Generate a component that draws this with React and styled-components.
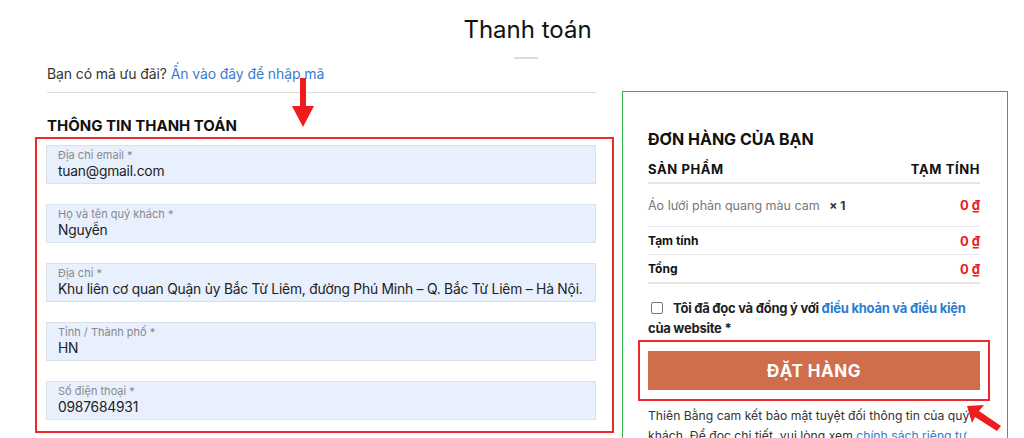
import React from "react";
import styled, { createGlobalStyle } from "styled-components";

const GlobalStyle = createGlobalStyle`
  body {
    margin: 0;
    background: #fff;
    font-family: Inter, "Noto Sans", sans-serif;
    color: #222;
    overflow: hidden;
  }
`;

const Page = styled.div`
  position: relative;
  width: 1024px;
  height: 438px;
  overflow: hidden;
`;

const Title = styled.h1`
  margin: 0;
  padding-top: 13px;
  text-align: center;
  font-size: 24px;
  line-height: 34px;
  font-weight: 400;
  color: #111;
  padding-left: 31px;
`;

const TitleBar = styled.div`
  width: 24px;
  height: 2px;
  background: #ddd;
  margin: 10px 0 0 514px;
`;

const Columns = styled.div`
  display: grid;
  grid-template-columns: 549px 386px;
  column-gap: 26px;
  margin: 4px 0 0 47px;
  align-items: start;
`;

const LeftCol = styled.div`
  position: relative;
`;

const Coupon = styled.div`
  font-size: 14px;
  line-height: 20px;
  letter-spacing: -0.1px;
  color: #333;
  padding-top: 1px;
  padding-bottom: 8px;
  border-bottom: 1px solid #ddd;
  a {
    color: #3a7dcc;
    text-decoration: none;
  }
`;

const Heading = styled.h3`
  margin: 23px 0 0;
  font-size: 15px;
  line-height: 20px;
  font-weight: 700;
  color: #111;
`;

const Fields = styled.div`
  position: relative;
  display: flex;
  flex-direction: column;
  gap: 20px;
  margin-top: 9px;
  margin-left: -1px;
`;

const Field = styled.div`
  height: 39px;
  box-sizing: border-box;
  background: #e8f0fe;
  border: 1px solid #dbe1ea;
  padding: 3px 11px 0;
`;

const Label = styled.div`
  font-size: 11px;
  line-height: 13px;
  color: #888;
`;

const Value = styled.div`
  font-size: 13.8px;
  line-height: 19px;
  letter-spacing: -0.2px;
  color: #222;
  white-space: nowrap;
`;

const Annotation = styled.div`
  position: absolute;
  border: 2px solid #ec2a2e;
  box-sizing: border-box;
  left: ${p => p.l}px;
  top: ${p => p.t}px;
  right: ${p => p.r}px;
  bottom: ${p => p.b}px;
  pointer-events: none;
`;

const ArrowSvg = styled.svg`
  position: absolute;
  left: ${p => p.x}px;
  top: ${p => p.y}px;
`;

const OrderBox = styled.div`
  margin-top: 28px;
  border: 1.5px solid #2fae4a;
  padding: 37px 27px 0 25px;
  height: 380px;
  box-sizing: border-box;
`;

const OrderTitle = styled.h3`
  margin: 0 0 7px;
  font-size: 16px;
  line-height: 20px;
  font-weight: 700;
  color: #111;
`;

const Row = styled.div`
  display: flex;
  justify-content: space-between;
  align-items: center;
  box-sizing: border-box;
  height: ${p => p.h}px;
  border-bottom: ${p => p.thick ? 2 : 1}px solid #e6e6e6;
  font-size: ${p => p.head ? 13 : 12}px;
  font-weight: ${p => p.bold ? 700 : 400};
  letter-spacing: ${p => p.head ? "0.6px" : "0"};
  color: #111;
`;

const Product = styled.span`
  font-size: 12.5px;
  color: #777;
  b {
    color: #333;
    margin-left: 6px;
    font-size: 12px;
  }
`;

const Price = styled.span`
  color: #ee1c24;
  font-weight: 700;
  font-size: 13px;
`;

const Terms = styled.div`
  margin-top: 14px;
  font-size: 13px;
  line-height: 20px;
  letter-spacing: -0.25px;
  font-weight: 700;
  color: #222;
  a {
    color: #2a7dd1;
    text-decoration: none;
  }
`;

const Check = styled.span`
  display: inline-block;
  width: 10px;
  height: 10px;
  border: 1px solid #777;
  border-radius: 2px;
  margin: 0 10px 0 3px;
  vertical-align: -1px;
`;

const ButtonWrap = styled.div`
  position: relative;
  margin-top: 13px;
`;

const OrderButton = styled.button`
  display: block;
  width: 100%;
  height: 39px;
  border: none;
  background: #d06d4b;
  color: #fff;
  font-family: inherit;
  font-size: 17px;
  font-weight: 700;
  letter-spacing: 0.5px;
`;

const Note = styled.p`
  margin: 16px 0 0;
  font-size: 12.2px;
  line-height: 20px;
  color: #333;
  a {
    color: #2a7dd1;
    text-decoration: none;
  }
`;

const fields = [
  { label: "Địa chỉ email *", value: "tuan@gmail.com" },
  { label: "Họ và tên quý khách *", value: "Nguyễn" },
  { label: "Địa chỉ *", value: "Khu liên cơ quan Quận ủy Bắc Từ Liêm, đường Phú Minh – Q. Bắc Từ Liêm – Hà Nội." },
  { label: "Tỉnh / Thành phố *", value: "HN" },
  { label: "Số điện thoại *", value: "0987684931" }
];

const App = () => (
  <Page>
    <GlobalStyle />
    <Title>Thanh toán</Title>
    <TitleBar />
    <Columns>
      <LeftCol>
        <Coupon>
          Bạn có mã ưu đãi? <a href="#">Ấn vào đây để nhập mã</a>
        </Coupon>
        <Heading>THÔNG TIN THANH TOÁN</Heading>
        <Fields>
          {fields.map(f => (
            <Field key={f.label}>
              <Label>{f.label}</Label>
              <Value>{f.value}</Value>
            </Field>
          ))}
          <Annotation l={-11} t={-8} r={-18} b={-13} />
        </Fields>
        <ArrowSvg x={245} y={15} width="22" height="50" viewBox="0 0 22 50">
          <rect x="8" y="0" width="6" height="30" fill="#ee1c1c" />
          <polygon points="0,28 22,28 11,49" fill="#ee1c1c" />
        </ArrowSvg>
      </LeftCol>
      <OrderBox>
        <OrderTitle>ĐƠN HÀNG CỦA BẠN</OrderTitle>
        <Row h={28} head bold thick>
          <span>SẢN PHẨM</span>
          <span>TẠM TÍNH</span>
        </Row>
        <Row h={43}>
          <Product>Áo lưới phản quang màu cam <b>× 1</b></Product>
          <Price>0 ₫</Price>
        </Row>
        <Row h={28} bold>
          <span>Tạm tính</span>
          <Price>0 ₫</Price>
        </Row>
        <Row h={29} bold thick>
          <span>Tổng</span>
          <Price>0 ₫</Price>
        </Row>
        <Terms>
          <Check />Tôi đã đọc và đồng ý với <a href="#">điều khoản và điều kiện</a> của website *
        </Terms>
        <ButtonWrap>
          <OrderButton>ĐẶT HÀNG</OrderButton>
          <Annotation l={-10} t={-11} r={-10} b={-11} />
        </ButtonWrap>
        <Note>
          Thiên Bằng cam kết bảo mật tuyệt đối thông tin của quý khách. Để đọc chi tiết, vui lòng xem <a href="#">chính sách riêng tư</a>.
        </Note>
      </OrderBox>
    </Columns>
    <ArrowSvg x={964} y={402} width="40" height="30" viewBox="0 0 40 30">
      <polygon points="3,4 20,3 15,9 37,24 33,29 11,15 8,21" fill="#ee1c1c" />
    </ArrowSvg>
  </Page>
);

export default App;
